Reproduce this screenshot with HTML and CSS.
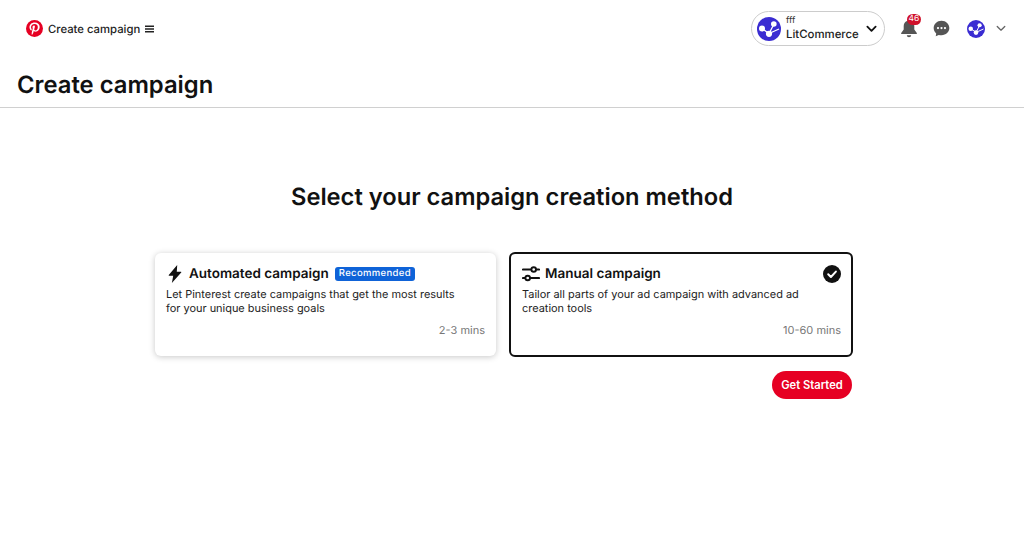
FILE: index.html
```html
<!DOCTYPE html>
<html lang="en">
<head>
<meta charset="utf-8">
<title>Create campaign</title>
<link rel="stylesheet" href="styles.css">
</head>
<body>
<header class="topbar">
  <div class="brand">
    <svg class="logo" viewBox="0 0 24 24"><circle cx="12" cy="12" r="12" fill="#e60023"/><path d="M12.400 3.600c-4.900 0-7.500 3.200-7.500 6.800 0 1.700.9 3.800 2.400 4.500.2.100.4 0 .4-.2l.4-1.400c0-.2 0-.3-.1-.5-.5-.6-.9-1.600-.9-2.500 0-2.500 1.900-4.800 5-4.800 2.700 0 4.600 1.800 4.600 4.400 0 2.900-1.500 4.900-3.400 4.900-1.100 0-1.900-.9-1.600-2 .3-1.300.9-2.600.9-3.600 0-.8-.5-1.500-1.400-1.500-1.100 0-2 1.100-2 2.600 0 1 .3 1.600.3 1.600l-1.300 5.400c-.3 1.100-.1 2.700 0 3.500 0 .2.300.3.500.1.300-.4 1.300-2 1.700-3.200l.7-2.500c.4.700 1.400 1.300 2.500 1.300 3.300 0 5.700-3.100 5.700-6.900 0-3.700-3-6-7-6z" fill="#fff"/></svg>
    <span class="brand-title">Create campaign</span>
    <svg class="menu" viewBox="0 0 10 8"><path d="M0 0h10v1.800H0zM0 3.100h10v1.800H0zM0 6.200h10V8H0z" fill="#222"/></svg>
  </div>
  <div class="actions">
    <div class="account">
      <svg class="avatar-lg" viewBox="0 0 24 24"><use href="#net"/></svg>
      <div class="account-text"><span class="account-small">fff</span><span class="account-name">LitCommerce</span></div>
      <svg class="chev-dark" viewBox="0 0 12 8"><path d="M1.500 1.500 6 6l4.500-4.500" fill="none" stroke="#111" stroke-width="2" stroke-linecap="round" stroke-linejoin="round"/></svg>
    </div>
    <div class="bell-wrap">
      <svg class="bell" viewBox="0 0 18 20"><path d="M9 1.500c-.8 0-1.400.6-1.400 1.300C5 3.500 3.700 5.600 3.700 8v3.500L1.200 15c-.3.500 0 1 .6 1h14.400c.6 0 .9-.5.600-1l-2.500-3.500V8c0-2.400-1.300-4.500-3.900-5.200 0-.7-.6-1.300-1.400-1.300zM6.800 17.200a2.200 2 0 0 0 4.400 0z" fill="#555"/></svg>
      <span class="badge">46</span>
    </div>
    <svg class="chat" viewBox="0 0 18 18"><path d="M9 .8C4.300.8.700 4.300.700 8.600c0 2.300 1 4.300 2.700 5.700l-.5 3 3.200-1.500c.9.300 1.900.4 2.900.4 4.700 0 8.300-3.400 8.300-7.600S13.700.8 9 .8z" fill="#555"/><circle cx="5.300" cy="8.600" r="1.200" fill="#fff"/><circle cx="9" cy="8.600" r="1.200" fill="#fff"/><circle cx="12.700" cy="8.600" r="1.200" fill="#fff"/></svg>
    <svg class="avatar-sm" viewBox="0 0 24 24"><use href="#net"/></svg>
    <svg class="chev-grey" viewBox="0 0 12 8"><path d="M1.500 1.500 6 6l4.500-4.500" fill="none" stroke="#666" stroke-width="1.600" stroke-linecap="round" stroke-linejoin="round"/></svg>
  </div>
</header>
<svg class="defs" aria-hidden="true"><defs><g id="net"><circle cx="12" cy="12" r="12" fill="#3a2cd2"/><path d="M5 11.500 12 16.500 17 7M12 16.500 22 12" fill="none" stroke="#fff" stroke-width="1.300"/><circle cx="5" cy="11.500" r="3" fill="#fff"/><circle cx="12" cy="16.800" r="3.100" fill="#fff"/><circle cx="16.800" cy="7" r="2.800" fill="#fff"/></g></defs></svg>
<div class="page-head"><h1>Create campaign</h1></div>
<main class="content">
  <h2>Select your campaign creation method</h2>
  <div class="cards">
    <section class="card">
      <div class="card-head">
        <svg class="card-icon" viewBox="0 0 18 20"><path d="M11.500 0 2 11.200c-.3.400 0 .9.500.9H7L5.500 20 16 8.300c.3-.4 0-.9-.5-.9H11z" fill="#111"/></svg>
        <h3>Automated campaign</h3>
        <span class="tag">Recommended</span>
      </div>
      <p>Let Pinterest create campaigns that get the most results for your unique business goals</p>
      <div class="time">2-3 mins</div>
    </section>
    <section class="card selected">
      <div class="card-head">
        <svg class="card-icon sliders" viewBox="0 0 18 16"><path d="M1 3.500h8M14.500 3.500H17M1 12h1.800M8.500 12H17" stroke="#111" stroke-width="2.200" stroke-linecap="round" fill="none"/><circle cx="11.700" cy="3.500" r="2.300" fill="none" stroke="#111" stroke-width="1.900"/><circle cx="5.700" cy="12" r="2.300" fill="none" stroke="#111" stroke-width="1.900"/></svg>
        <h3>Manual campaign</h3>
        <svg class="check" viewBox="0 0 18 18"><circle cx="9" cy="9" r="9" fill="#111"/><path d="M5.200 9.300 7.900 12l5-5.400" fill="none" stroke="#fff" stroke-width="2" stroke-linecap="round" stroke-linejoin="round"/></svg>
      </div>
      <p>Tailor all parts of your ad campaign with advanced ad creation tools</p>
      <div class="time">10-60 mins</div>
    </section>
  </div>
  <div class="cta"><button class="start">Get Started</button></div>
</main>
</body>
</html>
```

FILE: styles.css
```css
* { box-sizing: border-box; }
html, body { margin: 0; padding: 0; }
body {
  width: 1024px;
  height: 553px;
  overflow: hidden;
  background: #fff;
  color: #111;
  font-family: Inter, "Liberation Sans", sans-serif;
  text-rendering: geometricPrecision;
}
.defs { display: none; }
.topbar {
  height: 57px;
  display: flex;
  justify-content: space-between;
  align-items: center;
  padding: 0 18px 0 26px;
}
.brand { display: flex; align-items: center; }
.logo { width: 17px; height: 17px; margin-right: 5px; }
.brand-title { font-size: 11.300px; font-weight: 500; color: #222; }
.menu { width: 9px; height: 8px; margin-left: 5px; }
.actions { display: flex; align-items: center; }
.account {
  width: 134px;
  height: 35px;
  border: 1px solid #ccc;
  border-radius: 18px;
  display: flex;
  align-items: center;
  padding: 0 7px 0 5px;
}
.avatar-lg { width: 24px; height: 24px; margin-right: 5px; }
.account-text { display: flex; flex-direction: column; flex: 1; line-height: 12px; margin-top: -2px; }
.account-small { font-size: 9px; color: #333; }
.account-name { font-size: 11.400px; font-weight: 500; color: #222; margin-top: 1px; }
.chev-dark { width: 11px; height: 8px; }
.bell-wrap { position: relative; width: 18px; height: 20px; margin-left: 15px; margin-top: -1px; }
.bell { width: 18px; height: 20px; display: block; }
.badge {
  position: absolute;
  left: 7px;
  top: -4px;
  width: 14px;
  height: 11px;
  border-radius: 6px;
  background: #d0112b;
  color: #fff;
  font-size: 8.500px;
  line-height: 11px;
  text-align: center;
}
.chat { width: 17px; height: 17px; margin-left: 15px; }
.avatar-sm { width: 18px; height: 18px; margin-left: 17px; }
.chev-grey { width: 10px; height: 7px; margin-left: 11px; }
.page-head {
  height: 51px;
  border-bottom: 1px solid #d0d0d0;
  padding: 10px 0 0 17px;
}
h1 { margin: 0; font-size: 23.800px; line-height: 36px; font-weight: 600; color: #111; }
.content { display: flex; flex-direction: column; }
h2 {
  margin: 72px 0 0;
  text-align: center;
  font-size: 23.700px;
  line-height: 34px;
  font-weight: 600;
  color: #111;
}
.cards { display: flex; align-items: center; gap: 13px; margin: 38px 0 0 155px; }
.card {
  width: 341px;
  height: 103px;
  border-radius: 6px;
  background: #fff;
  padding: 10px 11px 0 11px;
  box-shadow: 0 1px 6px rgba(0,0,0,.22);
}
.card.selected {
  width: 344px;
  height: 105px;
  border: 2px solid #111;
  box-shadow: none;
  padding: 9px 10px 0 11px;
}
.card-head { display: flex; align-items: center; height: 21px; }
.card-icon { width: 16px; height: 18px; margin: 0 6px 0 1px; flex: none; }
.sliders { width: 18px; height: 16px; margin: 0 5px 0 0; }
h3 { margin: 0; font-size: 13.500px; font-weight: 600; color: #111; }
.tag {
  margin-left: 6px;
  height: 14px;
  padding: 0 4px;
  border-radius: 3px;
  background: #0f63d8;
  color: #fff;
  font-size: 9.500px;
  font-weight: 500;
  line-height: 14px;
  letter-spacing: .35px;
}
.check { width: 18px; height: 18px; margin-left: auto; }
p { margin: 3px 0 0; font-size: 10.950px; line-height: 14px; color: #222; width: 300px; }
.selected p { width: 310px; }
.time { margin-top: 8px; text-align: right; font-size: 11px; line-height: 14px; color: #777; }
.cta { display: flex; justify-content: flex-end; margin-top: 14px; padding-right: 172px; }
.start {
  width: 80px;
  height: 28px;
  border: 0;
  border-radius: 14px;
  background: #e60023;
  color: #fff;
  font-family: inherit;
  font-size: 11.200px;
  font-weight: 600;
  padding: 0;
}
```
